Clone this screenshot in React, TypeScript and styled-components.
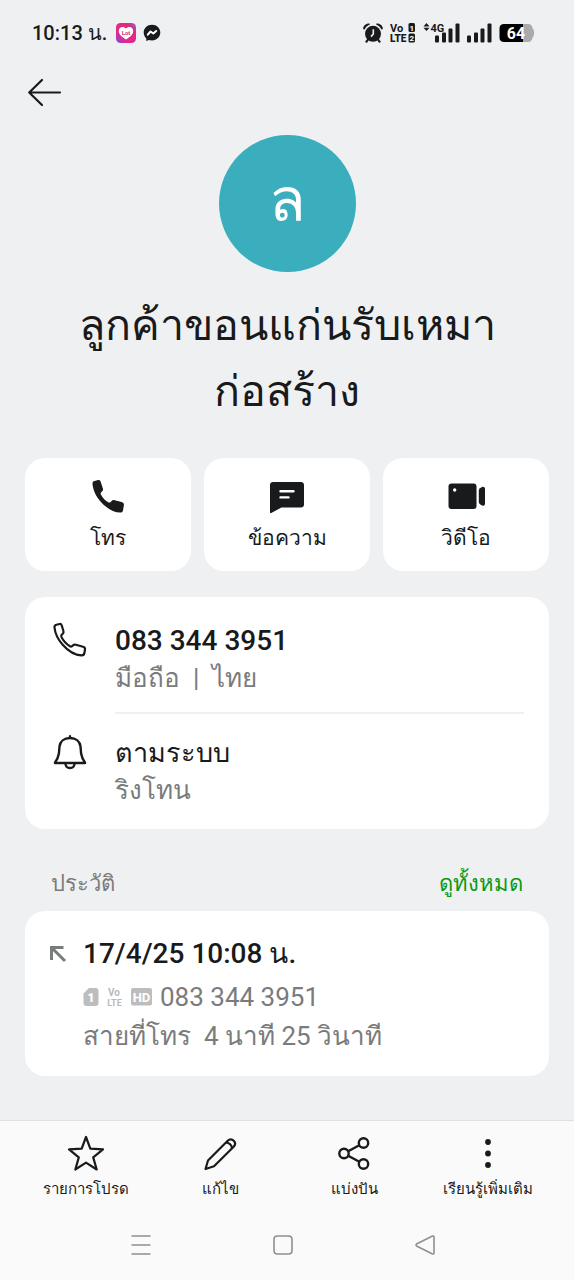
import React from "react";
import styled, { createGlobalStyle } from "styled-components";

const INK = "#191a1b";
const MUTED = "#7a7b7c";

const GlobalStyle = createGlobalStyle`
  *, *::before, *::after { box-sizing: border-box; }
  html, body { margin: 0; padding: 0; }
  body {
    background: #eff0f2;
    color: ${INK};
    font-family: Roboto, serif;
  }
  button { font: inherit; color: inherit; background: none; border: 0; padding: 0; margin: 0; cursor: pointer; }
  svg { display: block; flex: none; }
`;

const Screen = styled.div`
  min-height: 100vh;
  display: flex;
  flex-direction: column;
`;

const StatusBar = styled.header`
  display: flex;
  justify-content: space-between;
  align-items: center;
  height: 66px;
  padding: 0 39px 0 32px;
`;

const StatusGroup = styled.div`
  display: flex;
  align-items: center;
  gap: 7px;
`;

const Clock = styled.time`
  font-size: 20px;
  line-height: 24px;
  font-weight: 500;
  margin-right: 2px;
`;

const TopBar = styled.nav`
  display: flex;
  padding: 10px 27px 0;
  height: 69px;
`;

const BackButton = styled.button`
  width: 36px;
  height: 34px;
`;

const Main = styled.main`
  flex: 1;
  padding: 0 25px 43px;
`;

const Profile = styled.section`
  display: flex;
  flex-direction: column;
  align-items: center;
  padding: 0 35px;
`;

const Avatar = styled.div`
  width: 137px;
  height: 137px;
  padding-bottom: 6px;
  border-radius: 50%;
  background: #3aaebd;
  color: #fff;
  display: flex;
  align-items: center;
  justify-content: center;
  font-size: 60px;
  line-height: 72px;
`;

const Name = styled.h1`
  margin: 20px 0 34px;
  font-size: 43px;
  line-height: 66px;
  font-weight: 400;
  text-align: center;
`;

const Actions = styled.div`
  display: grid;
  grid-template-columns: repeat(3, 1fr);
  gap: 13px;
`;

const ActionButton = styled.button`
  display: flex;
  flex-direction: column;
  align-items: center;
  gap: 6px;
  height: 113px;
  padding-top: 20px;
  border-radius: 20px;
  background: #fff;
  font-size: 21px;
  line-height: 36px;
`;

const Card = styled.section`
  border-radius: 20px;
  background: #fff;
`;

const DetailCard = styled(Card)`
  margin-top: 26px;
  padding: 0 25px 0 27px;
`;

const DetailIcon = styled.span`
  padding-top: 25px;
`;

const DetailText = styled.div`
  flex: 1;
  padding: 25px 0 16px;
`;

const DetailRow = styled.div`
  display: flex;
  gap: 27px;

  & + & ${DetailIcon} { padding-top: 22px; }
  & + & ${DetailText} { border-top: 2px solid #f0f0f1; padding: 20px 0 21px; }
`;

const Title = styled.p<{ $size?: number }>`
  margin: 0;
  font-size: ${(p) => p.$size ?? 28}px;
  line-height: 38px;
  font-weight: 500;
`;

const Subtitle = styled.p`
  margin: 0;
  font-size: 26px;
  line-height: 36px;
  color: ${MUTED};
  white-space: pre-wrap;
`;

const SectionHead = styled.div`
  display: flex;
  justify-content: space-between;
  align-items: center;
  height: 36px;
  margin: 37px 26px 9px;
  font-size: 22px;
  line-height: 36px;
`;

const SectionTitle = styled.h2`
  margin: 0;
  font-size: inherit;
  font-weight: 400;
  color: ${MUTED};
`;

const SeeAll = styled.a`
  color: #079b13;
  text-decoration: none;
`;

const HistoryCard = styled(Card)`
  display: flex;
  gap: 16px;
  padding: 24px 24px 22px;
`;

const CallArrow = styled.span`
  padding-top: 10px;
`;

const CallNumber = styled(Subtitle)`
  display: flex;
  align-items: center;
  gap: 8px;
  padding-top: 3px;
  line-height: 42px;
`;

const Footer = styled.footer`
  background: #fafafa;
  border-top: 1px solid #dfe0e2;
`;

const Tabs = styled.nav`
  display: grid;
  grid-template-columns: repeat(4, 1fr);
  padding: 13px 19px 0;
`;

const TabButton = styled.button`
  display: flex;
  flex-direction: column;
  align-items: center;
  gap: 3px;
  font-size: 15px;
  line-height: 28px;
  white-space: nowrap;
`;

const SystemNav = styled.nav`
  display: grid;
  grid-template-columns: repeat(3, 1fr);
  padding: 26px 78px 19px 70px;
`;

const SystemButton = styled.button`
  display: flex;
  justify-content: center;
  align-items: center;
  height: 32px;
`;

const PHONE = "M3.5 5.5C3.3 3.8 4.2 3 5.4 2.7L8.6 2C9.7 1.8 10.3 2.3 10.7 3.3L12.4 9C12.8 10.3 12.5 11.2 11.6 12L10.7 12.8C10.2 13.4 10.1 14.1 10.4 14.9C12.2 18.8 15.2 21.9 19 24.3C19.8 24.8 20.4 24.7 21.1 24.2L22.3 23.2C23 22.6 23.8 22.5 24.9 22.8L32 24.7C33.5 25.1 34.2 25.9 34 27.3L33.4 31C33.1 32.7 32.1 33.5 30.4 33.4C23.4 33.1 16.7 28.5 11.7 22.8C7.3 17.8 4.1 11.8 3.5 5.5Z";

const PHONE_SOLID = "M3.5 6C3.3 4.2 4.2 3.2 5.5 2.9L9 2C10.3 1.7 11.2 2.3 11.6 3.5L13.8 10.2C14.3 11.7 13.9 12.8 12.9 13.6L12 14.4C11.4 15 11.5 15.6 11.9 16.4C13.8 20 16.3 22.6 19.7 24.4C20.5 24.8 21.1 24.6 21.7 24L22.6 22.9C23.3 22.1 24.3 21.8 25.6 22.2L32.6 24C34.3 24.5 35.1 25.5 34.9 27L34.1 32C33.8 33.8 32.7 34.7 30.9 34.6C23.7 34.3 16.9 29.7 11.7 23.8C7.3 18.7 4.1 12.5 3.5 6Z";

const svgText = { fontFamily: "Roboto, sans-serif" };

const AppBadge = () => (
  <svg width="20" height="20" viewBox="0 0 20 20" aria-hidden="true">
    <defs>
      <linearGradient id="badge" x1="0" y1="1" x2="1" y2="0">
        <stop offset="0" stopColor="#7a49d8" />
        <stop offset="0.3" stopColor="#e22a8c" />
        <stop offset="0.75" stopColor="#e22a7c" />
        <stop offset="1" stopColor="#7a65c8" />
      </linearGradient>
    </defs>
    <rect width="20" height="20" rx="4.5" fill="url(#badge)" />
    <path d="M10 16.5C6 14 2.8 11.5 2.8 8C2.8 4 7.5 2.6 10 5.6C12.5 2.6 17.2 4 17.2 8C17.2 11.5 14 14 10 16.5Z" fill="#fff" />
    <text x="10" y="11.5" textAnchor="middle" fontSize="6" fontWeight="700" fill="#d6336c" {...svgText}>Lot</text>
  </svg>
);

const Messenger = () => (
  <svg width="18" height="18" viewBox="0 0 18 18" aria-hidden="true">
    <path d="M9 .7C4.2 .7 .7 4.1 .7 8.6C.7 11 1.7 13 3.3 14.4V16.9L5.9 15.9C6.9 16.2 7.9 16.4 9 16.4C13.8 16.4 17.3 13 17.3 8.6C17.3 4.1 13.8 .7 9 .7Z" fill={INK} />
    <path d="M4.8 10.7L7.5 7.5L10.3 9.5L13.2 7" fill="none" stroke="#fff" strokeWidth="2" strokeLinecap="round" strokeLinejoin="round" />
  </svg>
);

const Alarm = () => (
  <svg width="20" height="20" viewBox="0 0 20 20" aria-hidden="true">
    <circle cx="10" cy="10.8" r="8" fill={INK} />
    <path d="M.2 5.8C0 2.8 3 .2 6.2 .4C7 .5 7.1 1.4 6.4 1.8C4.4 2.8 3 4 1.9 5.9C1.4 6.7 .3 6.6 .2 5.8ZM19.8 5.8C20 2.8 17 .2 13.8 .4C13 .5 12.900 1.4 13.6 1.8C15.6 2.8 17 4 18.1 5.9C18.6 6.7 19.7 6.6 19.8 5.8Z" fill={INK} />
    <path d="M5 16.5L3.5 18.7M15 16.5L16.5 18.7" stroke={INK} strokeWidth="2.2" strokeLinecap="round" />
    <path d="M10.3 6.2V11L8 13.6" stroke="#eff0f2" strokeWidth="1.6" fill="none" />
  </svg>
);

const VolteStatus = () => (
  <svg width="26" height="20" viewBox="0 0 26 20" aria-hidden="true">
    <text x="0" y="9" fontSize="11" fontWeight="700" fill={INK} {...svgText}>Vo</text>
    <text x="0" y="19" fontSize="10" fontWeight="900" fill={INK} {...svgText}>LTE</text>
    <rect x="18.5" y="0" width="6.5" height="9" rx="1.5" fill={INK} />
    <rect x="18.5" y="10.5" width="6.5" height="9" rx="1.5" fill={INK} />
    <text x="21.7" y="7.5" textAnchor="middle" fontSize="8" fontWeight="700" fill="#fff" {...svgText}>1</text>
    <text x="21.7" y="18" textAnchor="middle" fontSize="8" fontWeight="700" fill="#fff" {...svgText}>2</text>
  </svg>
);

const Bars = () => (
  <g fill={INK}>
    <rect x="0" y="12" width="4" height="7" rx="1" />
    <rect x="7" y="9" width="4" height="10" rx="1" />
    <rect x="13.5" y="5" width="4" height="14" rx="1" />
    <rect x="20.5" y="0" width="4" height="19" rx="1" />
  </g>
);

const Signal4G = () => (
  <svg width="37" height="20" viewBox="0 0 37 20" aria-label="4G">
    <path d="M3.5 0L6.5 3.5H.5ZM3.5 8L.5 4.8H6.5Z" fill={INK} />
    <text x="7.5" y="8.5" fontSize="11" fontWeight="700" fill={INK} {...svgText}>4G</text>
    <g transform="translate(12 0.5)"><Bars /></g>
  </svg>
);

const Signal = () => (
  <svg width="25" height="20" viewBox="0 0 25 20" aria-hidden="true">
    <g transform="translate(0 0.5)"><Bars /></g>
  </svg>
);

const Battery = () => (
  <svg width="36" height="20" viewBox="0 0 36 20" aria-hidden="true">
    <path d="M24 1H29C31.5 1 33.5 3 33.5 5.2C35.6 6.5 35.6 13 33.5 14.5C33.5 17 31.5 19 29 19H24Z" fill="#a9aaab" />
    <path d="M5 1H24V19H5C2.5 19 .5 17.5 .5 15V5C.5 2.5 2.5 1 5 1Z" fill="#000" />
    <text x="17" y="15.5" textAnchor="middle" fontSize="16" fontWeight="700" fill="#fff" {...svgText}>64</text>
  </svg>
);

const BackArrow = () => (
  <svg width="36" height="34" viewBox="0 0 36 34" fill="none" stroke={INK} strokeWidth="2.2" strokeLinecap="round" strokeLinejoin="round" aria-hidden="true">
    <path d="M15 4L2.2 16.5L15 29M2.2 16.5H33" />
  </svg>
);

const CallFilled = () => (
  <svg width="36" height="36" viewBox="1 0 36 36" aria-hidden="true">
    <path d={PHONE_SOLID} fill={INK} />
  </svg>
);

const MessageFilled = () => (
  <svg width="36" height="36" viewBox="0 0 36 36" aria-hidden="true">
    <path d="M4 4H32C33.8 4 35 5.2 35 7V26.5C35 28.3 33.8 29.5 32 29.5H12.5L2.2 35C1.4 35.4 1 35 1 34.2V7C1 5.2 2.2 4 4 4Z" fill={INK} />
    <path d="M11.5 13.3H24.5M11.5 19.4H19.5" stroke="#fff" strokeWidth="2.4" strokeLinecap="round" />
  </svg>
);

const VideoFilled = () => (
  <svg width="40" height="36" viewBox="0 0 40 36" aria-hidden="true">
    <rect x="2.5" y="5.5" width="28" height="25.5" rx="3" fill={INK} />
    <path d="M32.8 12.5C32.8 11.5 33.2 10.8 34 10.2L36 8.9C37.500 8.300 39 9.200 39 11V25.5C39 27.300 37.500 28.300 36 27.500L34 26.300C33.2 25.800 32.8 25 32.8 24Z" fill={INK} />
    <circle cx="8.7" cy="12" r="1.7" fill="#fff" />
  </svg>
);

const CallOutline = () => (
  <svg width="36" height="36" viewBox="1 0 36 36" aria-hidden="true">
    <path d={PHONE} fill="none" stroke={INK} strokeWidth="2.2" strokeLinejoin="round" />
  </svg>
);

const Bell = () => (
  <svg width="36" height="36" viewBox="0 0 36 36" fill="none" stroke={INK} strokeWidth="2.4" strokeLinejoin="round" strokeLinecap="round" aria-hidden="true">
    <path d="M18 2.2V4M3 28.5C5 26 6.2 23.5 6.9 19.5L7.5 12.5C8.1 7.5 12 4 18 4C24 4 27.9 7.5 28.5 12.5L29.1 19.5C29.8 23.5 31 26 33 28.5V29H3Z" />
    <path d="M13.5 30C14 35.3 22 35.3 22.5 30" />
  </svg>
);

const OutgoingArrow = () => (
  <svg width="18" height="18" viewBox="0 0 18 18" fill="none" stroke={MUTED} strokeWidth="3" aria-hidden="true">
    <path d="M14.5 2.5H2.5V15M2.5 2.5L16 16" />
  </svg>
);

const SimBadge = () => (
  <svg width="16" height="20" viewBox="0 0 16 20" aria-label="SIM 1">
    <path d="M6 1H12.5C14.3 1 15.5 2.2 15.5 4V16C15.5 17.8 14.3 19 12.5 19H3.5C1.7 19 .5 17.8 .5 16V6.5Z" fill="#bdbdbe" />
    <text x="8" y="14.5" textAnchor="middle" fontSize="12" fontWeight="900" fill="#fff" {...svgText}>1</text>
  </svg>
);

const VolteBadge = () => (
  <svg width="16" height="20" viewBox="0 0 16 20" aria-label="VoLTE" fill="#b9b9ba">
    <text x="7" y="9" textAnchor="middle" fontSize="10" fontWeight="700" {...svgText}>Vo</text>
    <text x="7.5" y="18.5" textAnchor="middle" fontSize="9" fontWeight="700" {...svgText}>LTE</text>
  </svg>
);

const HdBadge = () => (
  <svg width="21" height="20" viewBox="0 0 21 20" aria-label="HD">
    <rect x="0" y="1" width="21" height="17.5" rx="2" fill="#bdbdbe" />
    <text x="10.5" y="14.5" textAnchor="middle" fontSize="13" fontWeight="700" fill="#fff" {...svgText}>HD</text>
  </svg>
);

const Star = () => (
  <svg width="38" height="38" viewBox="0 0 38 38" fill="none" stroke={INK} strokeWidth="2.2" strokeLinejoin="round" aria-hidden="true">
    <path d="M19 3L23.3 14.6L36 15.4L26.2 23.4L29.7 35.5L19 28.6L8.3 35.5L11.8 23.4L2 15.4L14.7 14.6Z" />
  </svg>
);

const Pencil = () => (
  <svg width="38" height="38" viewBox="0 0 38 38" fill="none" stroke={INK} strokeWidth="2.2" strokeLinejoin="round" aria-hidden="true">
    <path d="M4.5 35L7 26.5L26.7 6.8C28.5 5 31 5 32.7 6.7C34.4 8.4 34.4 10.9 32.7 12.7L13 32.3Z" />
    <path d="M25 8.5C28 8.5 31 11.4 31 14.4" />
  </svg>
);

const Share = () => (
  <svg width="38" height="38" viewBox="0 0 38 38" fill="none" stroke={INK} strokeWidth="2.4" aria-hidden="true">
    <circle cx="9" cy="19.5" r="4.7" />
    <circle cx="28.5" cy="9" r="4.7" />
    <circle cx="28.5" cy="30" r="4.7" />
    <path d="M13.2 17.3L24.3 11.3M13.2 21.7L24.3 27.7" />
  </svg>
);

const More = () => (
  <svg width="38" height="38" viewBox="0 0 38 38" fill={INK} aria-hidden="true">
    <circle cx="19" cy="8" r="2.9" />
    <circle cx="19" cy="19.5" r="2.9" />
    <circle cx="19" cy="31" r="2.9" />
  </svg>
);

const SystemIcon = ({ d }: { d: string }) => (
  <svg width="22" height="22" viewBox="0 0 22 22" fill="none" stroke="#8f8f90" strokeWidth="1.6" strokeLinejoin="round" aria-hidden="true">
    <path d={d} />
  </svg>
);

const actions = [
  { label: "โทร", Icon: CallFilled },
  { label: "ข้อความ", Icon: MessageFilled },
  { label: "วิดีโอ", Icon: VideoFilled },
];

const tabs = [
  { label: "รายการโปรด", Icon: Star },
  { label: "แก้ไข", Icon: Pencil },
  { label: "แบ่งปัน", Icon: Share },
  { label: "เรียนรู้เพิ่มเติม", Icon: More },
];

const systemButtons = [
  { label: "แอปล่าสุด", d: "M1.5 2H20.5M1.5 11H20.5M1.5 20H20.5" },
  { label: "หน้าหลัก", d: "M5.5 2H16.5Q20 2 20 5.5V16.5Q20 20 16.5 20H5.5Q2 20 2 16.5V5.5Q2 2 5.5 2Z" },
  { label: "กลับ", d: "M18 2.2Q20 1.4 20 3.2V18.8Q20 20.6 18 19.8L3 12.2Q1 11 3 9.8Z" },
];

export default function App() {
  return (
    <Screen lang="th">
      <GlobalStyle />
      <StatusBar>
        <StatusGroup>
          <Clock>10:13 น.</Clock>
          <AppBadge />
          <Messenger />
        </StatusGroup>
        <StatusGroup>
          <Alarm />
          <VolteStatus />
          <Signal4G />
          <Signal />
          <Battery />
        </StatusGroup>
      </StatusBar>
      <TopBar>
        <BackButton aria-label="ย้อนกลับ">
          <BackArrow />
        </BackButton>
      </TopBar>
      <Main>
        <Profile>
          <Avatar>ล</Avatar>
          <Name>ลูกค้าขอนแก่นรับเหมาก่อสร้าง</Name>
        </Profile>
        <Actions>
          {actions.map(({ label, Icon }) => (
            <ActionButton key={label}>
              <Icon />
              {label}
            </ActionButton>
          ))}
        </Actions>
        <DetailCard>
          <DetailRow>
            <DetailIcon><CallOutline /></DetailIcon>
            <DetailText>
              <Title>083 344 3951</Title>
              <Subtitle>{"มือถือ  |  ไทย"}</Subtitle>
            </DetailText>
          </DetailRow>
          <DetailRow>
            <DetailIcon><Bell /></DetailIcon>
            <DetailText>
              <Title $size={27}>ตามระบบ</Title>
              <Subtitle>ริงโทน</Subtitle>
            </DetailText>
          </DetailRow>
        </DetailCard>
        <SectionHead>
          <SectionTitle>ประวัติ</SectionTitle>
          <SeeAll href="#history">ดูทั้งหมด</SeeAll>
        </SectionHead>
        <HistoryCard id="history">
          <CallArrow><OutgoingArrow /></CallArrow>
          <div>
            <Title>17/4/25 10:08 น.</Title>
            <CallNumber>
              <SimBadge />
              <VolteBadge />
              <HdBadge />
              083 344 3951
            </CallNumber>
            <Subtitle>{"สายที่โทร  4 นาที 25 วินาที"}</Subtitle>
          </div>
        </HistoryCard>
      </Main>
      <Footer>
        <Tabs>
          {tabs.map(({ label, Icon }) => (
            <TabButton key={label}>
              <Icon />
              {label}
            </TabButton>
          ))}
        </Tabs>
        <SystemNav>
          {systemButtons.map(({ label, d }) => (
            <SystemButton key={label} aria-label={label}>
              <SystemIcon d={d} />
            </SystemButton>
          ))}
        </SystemNav>
      </Footer>
    </Screen>
  );
}
